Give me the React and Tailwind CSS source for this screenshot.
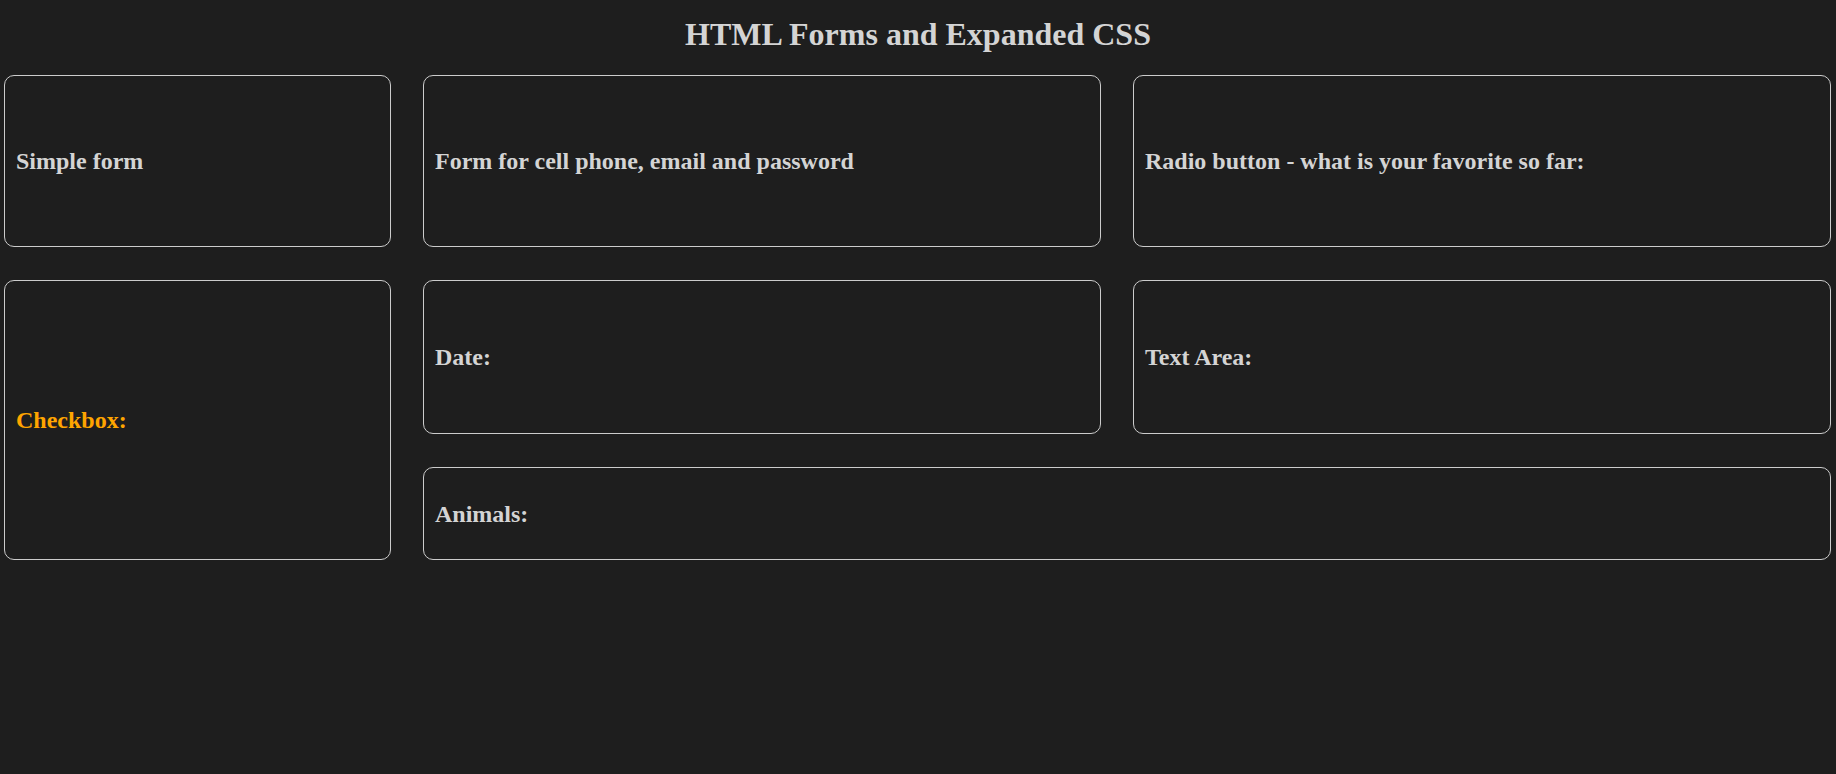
const cards = [
  { label: "Simple form", area: "col-start-1 row-start-1" },
  { label: "Form for cell phone, email and password", area: "col-start-2 row-start-1" },
  { label: "Radio button - what is your favorite so far:", area: "col-start-3 row-start-1" },
  { label: "Checkbox:", area: "col-start-1 row-start-2 row-span-2", accent: true },
  { label: "Date:", area: "col-start-2 row-start-2" },
  { label: "Text Area:", area: "col-start-3 row-start-2" },
  { label: "Animals:", area: "col-start-2 col-span-2 row-start-3" },
];

function Card({ label, area, accent }) {
  return (
    <div
      className={`${area} flex items-center rounded-[10px] border border-[#cccccc] pl-[11px]`}
    >
      <h2
        className={`text-[24px] font-bold leading-normal ${
          accent ? "text-[#ffa500]" : "text-[#d4d4d4]"
        }`}
      >
        {label}
      </h2>
    </div>
  );
}

export default function App() {
  return (
    <div
      className="min-h-screen w-full bg-[#1e1e1e] text-[#d4d4d4]"
      style={{ fontFamily: '"Liberation Serif", "Times New Roman", serif' }}
    >
      <h1 className="pt-[16px] text-center text-[32px] font-bold leading-[37px]">
        HTML Forms and Expanded CSS
      </h1>
      <div className="mt-[22px] grid grid-cols-[387px_678px_698px] grid-rows-[172px_154px_93px] gap-x-[32px] gap-y-[33px] pl-[4px]">
        {cards.map((c) => (
          <Card key={c.label} {...c} />
        ))}
      </div>
    </div>
  );
}
